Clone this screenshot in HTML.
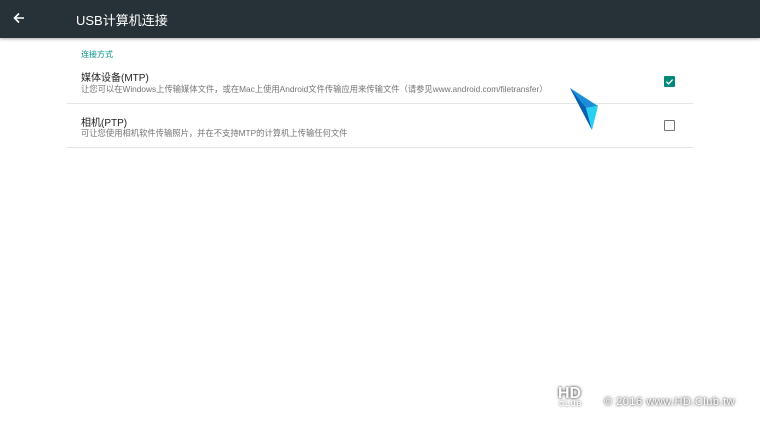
<!DOCTYPE html>
<html><head><meta charset="utf-8"><style>
body{margin:0;width:760px;height:428px;background:#fff;position:relative;overflow:hidden;font-family:"Liberation Sans","Noto Sans CJK SC",sans-serif}
.bar{position:absolute;left:0;top:0;width:760px;height:38px;background:#263238;box-shadow:0 1px 3px rgba(0,0,0,.35)}
.t{position:absolute;left:76px;top:10px;color:#fff;font-size:13px}
.a{position:absolute;left:12px;top:11px}
.sec{position:absolute;left:81px;top:49px;font-size:8px;color:#009688}
.h{position:absolute;left:81px;font-size:10px;color:#212121}
.s{position:absolute;left:81px;font-size:8.3px;color:#757575;white-space:nowrap}
.ln{position:absolute;left:67px;width:626px;height:1px;background:#e6e6e6}
.cb{position:absolute;left:664px;width:11px;height:11px;box-sizing:border-box;border-radius:1px}
.wm{position:absolute;left:604px;top:396px;font-size:11px;color:#fff;text-shadow:0 0 2px #555,0 0 3px #777;white-space:nowrap;letter-spacing:.5px}
</style></head><body>
<div class="bar"></div>
<svg class="a" width="14" height="14" viewBox="0 0 14 14"><path d="M12 7H2.5M7 2.5L2.5 7 7 11.5" stroke="#fff" stroke-width="1.6" fill="none"/></svg>
<div class="t">USB计算机连接</div>
<div class="sec">连接方式</div>
<div class="h" style="top:69px">媒体设备(MTP)</div>
<div class="s" style="top:83px">让您可以在Windows上传输媒体文件，或在Mac上使用Android文件传输应用来传输文件（请参见www.android.com/filetransfer）</div>
<div class="ln" style="top:103px"></div>
<div class="h" style="top:114px">相机(PTP)</div>
<div class="s" style="top:127px">可让您使用相机软件传输照片，并在不支持MTP的计算机上传输任何文件</div>
<div class="ln" style="top:147px"></div>
<div class="cb" style="top:76px;background:#00897b"><svg width="11" height="11" viewBox="0 0 10 10" style="position:absolute;left:0;top:0"><path d="M2.2 5.2L4.2 7.1 7.9 3.2" stroke="#fff" stroke-width="1.2" fill="none"/></svg></div>
<div class="cb" style="top:120px;border:1.5px solid #757575"></div>
<svg style="position:absolute;left:568px;top:86px" width="32" height="46" viewBox="0 0 32 46"><path d="M2 2L30 20 18 22 24 44Z" fill="#1a8fd8"/><path d="M2 2L18 22 24 44Z" fill="#0b5fb0"/><path d="M18 22L30 20 24 44Z" fill="#2ad0f0"/></svg>
<div style="position:absolute;left:558px;top:385px;font:bold 16px 'Liberation Sans';color:#fff;text-shadow:0 0 2px #555,0 0 3px #777">HD</div>
<div style="position:absolute;left:559px;top:401px;font:bold 7px 'Liberation Sans';color:#fff;text-shadow:0 0 2px #555;letter-spacing:1px">CLUB</div>
<div class="wm">© 2016  www.HD.Club.tw</div>
</body></html>
